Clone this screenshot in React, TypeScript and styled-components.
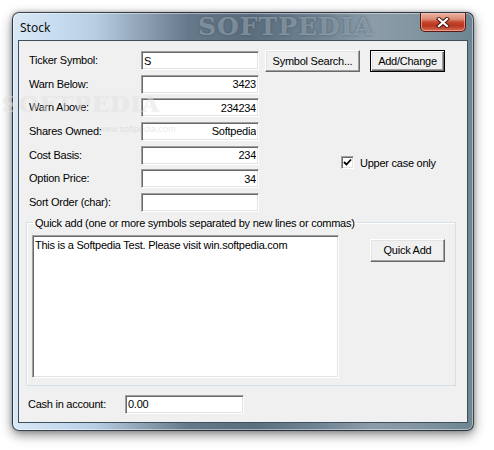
import React from "react";
import styled, { createGlobalStyle } from "styled-components";

const Global = createGlobalStyle`
  html, body { margin: 0; padding: 0; background: #ffffff; }
  body { width: 494px; height: 450px; overflow: hidden; position: relative; }
`;

const UI_FONT = `"Liberation Sans", Arial, sans-serif`;

const Window = styled.div`
  position: relative;
  box-sizing: border-box;
  margin: 12px 0 0 12px;
  width: 462px;
  height: 419px;
  border: 1px solid rgba(30, 40, 50, 0.85);
  border-radius: 7px;
  padding: 0 5px 7px 5px;
  display: flex;
  flex-direction: column;
  background: linear-gradient(
    90deg,
    #d9e8f6 0%,
    #c6dbef 10%,
    #b7cde2 18%,
    #8fa3b4 28%,
    #66798a 38%,
    #5b6e7e 52%,
    #6f8392 66%,
    #8c9da9 78%,
    #7f939f 90%,
    #6c8590 100%
  );
  box-shadow: 0 4px 12px rgba(0, 0, 0, 0.45), 0 0 4px rgba(0, 0, 0, 0.25),
    inset 0 0 0 1px rgba(255, 255, 255, 0.45);
`;

const TitleBar = styled.div`
  position: relative;
  height: 27px;
  display: flex;
  align-items: flex-start;
  overflow: hidden;
`;

const Title = styled.div`
  font-family: "Noto Sans", "Open Sans", sans-serif;
  font-size: 12px;
  line-height: 16px;
  color: #111;
  padding: 7px 0 0 2px;
  flex: 1;
  position: relative;
  z-index: 1;
`;

const TitleWatermark = styled.div`
  position: absolute;
  left: 180px;
  top: 1px;
  font-family: "DejaVu Serif", "Liberation Serif", serif;
  font-weight: bold;
  font-size: 25px;
  line-height: 26px;
  letter-spacing: 1px;
  color: rgba(170, 186, 198, 0.5);
  text-shadow: 0 0 3px rgba(60, 75, 88, 0.6);
`;

const CloseButton = styled.div`
  box-sizing: border-box;
  width: 46px;
  height: 19px;
  margin-right: 2px;
  border: 1px solid #5a1a12;
  border-top: none;
  border-radius: 0 0 5px 5px;
  background: linear-gradient(
    180deg,
    #eab3a4 0%,
    #dc8a74 35%,
    #c7472d 50%,
    #b93520 70%,
    #d36d50 100%
  );
  box-shadow: inset 0 0 0 1px rgba(255, 200, 190, 0.55);
  display: flex;
  align-items: center;
  justify-content: center;
  position: relative;
  z-index: 1;
`;

const Client = styled.div`
  flex: 1;
  box-sizing: border-box;
  border: 1px solid #3f4f5c;
  background: #f0f0f0;
  padding: 9px 0 0 7px;
  display: flex;
  flex-direction: column;
  font-family: ${UI_FONT};
  font-size: 11px;
  letter-spacing: -0.25px;
  color: #000;
  position: relative;
`;

const TopSection = styled.div`
  display: flex;
  align-items: flex-start;
`;

const FormGrid = styled.div`
  margin: 1px 0 0 3px;
  display: grid;
  grid-template-columns: 112px 118px;
  grid-auto-rows: 19px;
  row-gap: 4.67px;
  align-items: center;
`;

const Label = styled.div`
  line-height: 13px;
`;

const TextBox = styled.input<{ $align?: "left" | "right"; $w?: number }>`
  box-sizing: border-box;
  width: ${(p) => p.$w ?? 118}px;
  height: 19px;
  margin: 0;
  padding: 0 2px 0 2px;
  font-family: ${UI_FONT};
  font-size: 11px;
  letter-spacing: -0.25px;
  color: #000;
  background: #fff;
  text-align: ${(p) => p.$align ?? "left"};
  border-style: solid;
  border-width: 1px;
  border-color: #a0a0a0 #ffffff #ffffff #a0a0a0;
  box-shadow: inset 1px 1px 0 #696969, inset -1px -1px 0 #e3e3e3;
  outline: none;
`;

const RightCol = styled.div`
  margin-left: 6px;
  display: flex;
  flex-direction: column;
`;

const ButtonRow = styled.div`
  display: flex;
  gap: 10px;
`;

const Button = styled.div<{ $w: number; $h?: number; $default?: boolean }>`
  box-sizing: border-box;
  width: ${(p) => p.$w}px;
  height: ${(p) => p.$h ?? 22}px;
  background: #f0f0f0;
  display: flex;
  align-items: center;
  justify-content: center;
  font-size: 11px;
  line-height: 13px;
  border-style: solid;
  border-width: 1px;
  border-color: ${(p) =>
    p.$default ? "#000 #000 #000 #000" : "#ffffff #696969 #696969 #ffffff"};
  box-shadow: ${(p) =>
    p.$default
      ? "inset 1px 1px 0 #ffffff, inset -1px -1px 0 #696969, inset -2px -2px 0 #a0a0a0, inset 2px 2px 0 #e3e3e3"
      : "inset -1px -1px 0 #a0a0a0, inset 1px 1px 0 #e3e3e3"};
`;

const CheckRow = styled.div`
  margin: 84px 0 0 76px;
  display: flex;
  align-items: center;
  gap: 6px;
`;

const CheckBox = styled.div`
  box-sizing: border-box;
  width: 13px;
  height: 13px;
  background: #fff;
  border-style: solid;
  border-width: 1px;
  border-color: #a0a0a0 #ffffff #ffffff #a0a0a0;
  box-shadow: inset 1px 1px 0 #696969, inset -1px -1px 0 #e3e3e3;
  display: flex;
  align-items: center;
  justify-content: center;
`;

const GroupBox = styled.fieldset`
  box-sizing: border-box;
  width: 430px;
  height: 170px;
  margin: 4px 0 0 0;
  padding: 5px 5px 6px 5px;
  border: 1px solid #d5dfe5;
  box-shadow: inset 1px 1px 0 #ffffff;
  border-radius: 0;
  min-inline-size: auto;
  display: flex;
  align-items: flex-start;
`;

const Legend = styled.legend`
  margin-left: 1px;
  padding: 0 2px;
  font-size: 11px;
  line-height: 14px;
`;

const Memo = styled.textarea`
  box-sizing: border-box;
  width: 307px;
  height: 143px;
  margin: 0;
  padding: 3px 2px;
  resize: none;
  font-family: ${UI_FONT};
  font-size: 11px;
  line-height: 13px;
  letter-spacing: -0.25px;
  color: #000;
  background: #fff;
  border-style: solid;
  border-width: 1px;
  border-color: #a0a0a0 #ffffff #ffffff #a0a0a0;
  box-shadow: inset 1px 1px 0 #696969, inset -1px -1px 0 #e3e3e3;
  outline: none;
  overflow: hidden;
`;

const QuickAddWrap = styled.div`
  margin: 4px 0 0 31px;
`;

const CashRow = styled.div`
  margin: 9px 0 0 2px;
  display: grid;
  grid-template-columns: 97px 119px;
  align-items: center;
`;

const PageWatermark = styled.div`
  position: absolute;
  left: 2px;
  top: 90px;
  font-family: "DejaVu Serif", "Liberation Serif", serif;
  font-weight: bold;
  font-size: 23px;
  letter-spacing: 0.5px;
  color: rgba(255, 255, 255, 0.4);
  text-shadow: 0 0 1px rgba(140, 140, 140, 0.22);
  pointer-events: none;
  z-index: 5;
`;

const SmallWatermark = styled.div`
  position: absolute;
  left: 98px;
  top: 124px;
  font-family: "Liberation Sans", sans-serif;
  font-size: 9px;
  color: rgba(160, 160, 160, 0.25);
  pointer-events: none;
  z-index: 5;
`;

const rows: { label: string; value: string; align: "left" | "right" }[] = [
  { label: "Ticker Symbol:", value: "S", align: "left" },
  { label: "Warn Below:", value: "3423", align: "right" },
  { label: "Warn Above:", value: "234234", align: "right" },
  { label: "Shares Owned:", value: "Softpedia", align: "right" },
  { label: "Cost Basis:", value: "234", align: "right" },
  { label: "Option Price:", value: "34", align: "right" },
  { label: "Sort Order (char):", value: "", align: "left" },
];

export default function App() {
  return (
    <>
      <Global />
      <Window>
        <TitleBar>
          <TitleWatermark>SOFTPEDIA</TitleWatermark>
          <Title>Stock</Title>
          <CloseButton>
            <svg width="14" height="11" viewBox="0 0 14 11">
              <path
                d="M3 2 L11 9 M11 2 L3 9"
                stroke="#4a1a12"
                strokeWidth="4.2"
                strokeLinecap="square"
              />
              <path
                d="M3 2 L11 9 M11 2 L3 9"
                stroke="#ffffff"
                strokeWidth="2.2"
                strokeLinecap="square"
              />
            </svg>
          </CloseButton>
        </TitleBar>
        <Client>
          <TopSection>
            <FormGrid>
              {rows.map((r) => (
                <React.Fragment key={r.label}>
                  <Label>{r.label}</Label>
                  <TextBox readOnly value={r.value} $align={r.align} />
                </React.Fragment>
              ))}
            </FormGrid>
            <RightCol>
              <ButtonRow>
                <Button $w={95}>Symbol Search...</Button>
                <Button $w={75} $default>
                  Add/Change
                </Button>
              </ButtonRow>
              <CheckRow>
                <CheckBox>
                  <svg width="9" height="9" viewBox="0 0 9 9">
                    <path
                      d="M1 4 L3.5 6.5 L8 1.5"
                      stroke="#000"
                      strokeWidth="1.8"
                      fill="none"
                    />
                  </svg>
                </CheckBox>
                <span>Upper case only</span>
              </CheckRow>
            </RightCol>
          </TopSection>
          <GroupBox>
            <Legend>
              Quick add (one or more symbols separated by new lines or commas)
            </Legend>
            <Memo
              readOnly
              value="This is a Softpedia Test. Please visit win.softpedia.com"
            />
            <QuickAddWrap>
              <Button $w={75} $h={23}>
                Quick Add
              </Button>
            </QuickAddWrap>
          </GroupBox>
          <CashRow>
            <Label>Cash in account:</Label>
            <TextBox readOnly value="0.00" $w={119} />
          </CashRow>
        </Client>
      </Window>
      <PageWatermark>SOFTPEDIA</PageWatermark>
      <SmallWatermark>www.softpedia.com</SmallWatermark>
    </>
  );
}
